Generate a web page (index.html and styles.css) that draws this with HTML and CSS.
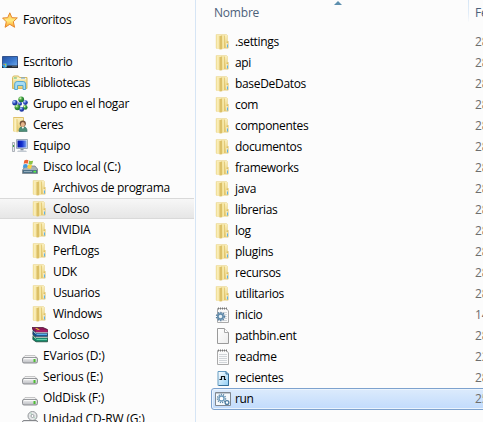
FILE: index.html
```html
<!DOCTYPE html>
<html lang="es">
<head>
<meta charset="utf-8">
<title>Coloso</title>
<link rel="stylesheet" href="styles.css">
</head>
<body>
<svg class="defs" width="0" height="0">
<defs>
<linearGradient id="gold" x2="1"><stop offset="0" stop-color="#eeda8c"/><stop offset=".5" stop-color="#fdf3c4"/><stop offset="1" stop-color="#e3c870"/></linearGradient>
<linearGradient id="goldv" x2="0" y2="1"><stop offset="0" stop-color="#fbf1c2"/><stop offset="1" stop-color="#e6ca6c"/></linearGradient>
<linearGradient id="star" x2="0" y2="1"><stop offset="0" stop-color="#ffc04a"/><stop offset=".55" stop-color="#ffec80"/><stop offset="1" stop-color="#ff9d24"/></linearGradient>
<linearGradient id="blue" x2="1" y2="1"><stop offset="0" stop-color="#234f9f"/><stop offset=".5" stop-color="#3977cd"/><stop offset="1" stop-color="#76b2ee"/></linearGradient>
<linearGradient id="screen" x2="1" y2="0"><stop offset="0" stop-color="#0714a8"/><stop offset=".5" stop-color="#1330cf"/><stop offset="1" stop-color="#7da4f1"/></linearGradient>
<linearGradient id="metal" x2="0" y2="1"><stop offset="0" stop-color="#f4f4f4"/><stop offset="1" stop-color="#b9bbc0"/></linearGradient>
<radialGradient id="ballb" cx=".35" cy=".3"><stop offset="0" stop-color="#d3e2ff"/><stop offset=".5" stop-color="#4a6ed6"/><stop offset="1" stop-color="#1c35a0"/></radialGradient>
<radialGradient id="ballg" cx=".35" cy=".3"><stop offset="0" stop-color="#e2f8cd"/><stop offset=".5" stop-color="#5bb54e"/><stop offset="1" stop-color="#247f36"/></radialGradient>
<linearGradient id="paper" x2="1" y2="1"><stop offset="0" stop-color="#fff"/><stop offset="1" stop-color="#ececec"/></linearGradient>
<linearGradient id="bpaper" x2="1" y2="1"><stop offset="0" stop-color="#fff"/><stop offset="1" stop-color="#8fcdf4"/></linearGradient>
</defs>
<symbol id="folder" viewBox="0 0 16 16">
<path d="M1.200.500h10.300l1 1v12.700H1.200z" fill="url(#goldv)" stroke="#ead592" stroke-width=".6"/>
<path d="M1 1 5 2v13.500L1 14z" fill="url(#gold)"/>
<path d="M5 2 7.300 1.300v14L5 15.600z" fill="#dcc067"/>
<path d="M7.300 1.300 9 1v13.300l-1.700.800z" fill="#f6e7a6"/>
<path d="M9 1.500h.8V14H9z" fill="#e0c46c"/>
<path d="M11.800 7.500 13.500 7v7.200h-1.700z" fill="#ddc064"/>
<path d="M11.500 9h1v4.500h-1z" fill="#fff"/><path d="M12 10.500h1v3h-1z" fill="#5db2e6"/>
</symbol>
<symbol id="fav" viewBox="0 0 16 16"><path d="M7.800.8 9.900 5.700l5.400.2-4 3.800 1.300 5.600-4.800-3-4.700 3 1.200-5.500L.6 6l5.100-.3z" fill="url(#star)" stroke="#e5882e" stroke-width="1"/></symbol>
<symbol id="desk" viewBox="0 0 16 16"><path d="M.5 2.500h15v11H.5z" fill="url(#blue)" stroke="#35558d"/><path d="M0 11.500h16V14H0z" fill="#252d38"/><path d="M10 12h5v1h-5z" fill="#555b60"/><circle cx="2.800" cy="11.500" r="2.400" fill="#2d9de4"/><path d="M1.500 11h1.200V9.800H1.500z" fill="#f06435"/><path d="M3 11h1.300V9.800H3z" fill="#a0d94b"/><path d="M3 11.400h1.300v1.200H3z" fill="#ffe350"/></symbol>
<symbol id="lib" viewBox="0 0 16 16"><path d="M.5 13.500v-11L1.500 1h5l1 1.500H15v11z" fill="url(#goldv)" stroke="#d8b95f"/><path d="M2 3.800h12" stroke="#fffbe0"/><path d="M1.800 3h3" stroke="#52b76b"/><path d="M9 3h4" stroke="#629fdf"/><path d="M2.700 14.500V9q0-2.500 2.500-2.500h6q2.400 0 2.400 2.500v5.500H11v-4H5.500v4z" fill="#a5dcf5" stroke="#4ca1cb" stroke-width=".9"/></symbol>
<symbol id="group" viewBox="0 0 16 16"><circle cx="9.200" cy="3.400" r="2.900" fill="url(#ballg)"/><circle cx="2.900" cy="6.800" r="2.700" fill="url(#ballb)"/><circle cx="13.400" cy="6.600" r="2.400" fill="url(#ballb)"/><circle cx="8" cy="7.700" r="2" fill="url(#ballb)"/><circle cx="5.500" cy="11.300" r="2.900" fill="url(#ballg)"/><circle cx="13.200" cy="11.400" r="2.400" fill="url(#ballg)"/><circle cx="9.700" cy="13.400" r="2.400" fill="url(#ballb)"/></symbol>
<symbol id="user" viewBox="0 0 16 16"><path d="M1.500.500h10v13.500h-10z" fill="url(#goldv)" stroke="#dfc06a"/><path d="M1.200 1 5.500 2.200v13.300l-4.300-1.500z" fill="url(#gold)"/><path d="M7 14.500q0-5 3.800-5 4.300 0 4.300 5z" fill="#4c8e79" stroke="#386e61" stroke-width=".6"/><circle cx="10.800" cy="6.500" r="3.100" fill="#76543b"/><ellipse cx="10.800" cy="7.600" rx="2" ry="2.500" fill="#e6b58d"/><path d="m9.700 10 1.200 2 1.200-2z" fill="#fff"/></symbol>
<symbol id="pc" viewBox="0 0 16 16"><path d="M.5 4.500h2v9h-2z" fill="#e8eaed" stroke="#9aa1aa" stroke-width=".8"/><path d="M1 7h1v2H1z" fill="#43a847"/><path d="M4.500 1.500h11v9h-11z" fill="#dce4ed" stroke="#9eabb9"/><path d="M5.500 2.500h9v7h-9z" fill="url(#screen)"/><path d="M8.500 11h3v1.500h-3z" fill="#8793a1"/><path d="M6 12.500h8l1 1.500H5z" fill="#c2c9d1"/></symbol>
<symbol id="cdisk" viewBox="0 0 16 16"><path d="m2 9 2-2h9l2.500 3v4.500H.5V11z" fill="#aab3b9" stroke="#747e86" stroke-width=".8"/><path d="M1 11h14v3H1z" fill="#4d7187"/><path d="M2 12.500h8" stroke="#92acbc"/><path d="M11.500 11.800h2.500v1.700h-2.500z" fill="#5af044"/><path d="M2.300 1.500Q4.500 0 6.500 1.200L5.700 4.800q-2-1-4 0z" fill="#ee6335"/><path d="M7.200 1.500q2 1 4 0l-1 3.700q-2 .900-3.800 0z" fill="#8bc246"/><path d="M1.500 5.400q2-.900 4 0l-.9 3.500q-1.800-.900-3.800 0z" fill="#419bdf"/><path d="M6.200 5.800q2 .900 3.900 0l-1 3.600q-2 .800-3.800-.3z" fill="#ffd23c"/></symbol>
<symbol id="rar" viewBox="0 0 16 16"><path d="M0 .5h11l4.500 2v2.500H4L1 3z" fill="#8d1557" stroke="#3c0c2b" stroke-width=".7"/><path d="M3 1h2l3 2H6z" fill="#e4c331"/><path d="M4 3h11.500v2.500H4z" fill="#a61c64"/><path d="M1 3.500 4 5.700h11.500v4H4L.8 7.500z" fill="#14508c" stroke="#172b42" stroke-width=".7"/><path d="M4.500 7.500H15" stroke="#5ab0ea" stroke-width="1.200"/><path d="M1 8.500 4 10.500h11.500v4.300H4L.8 12.500z" fill="#118465" stroke="#153c2d" stroke-width=".7"/><path d="M4.500 12.500H15" stroke="#68d0a8" stroke-width="1.200"/><path d="M4 5.800h11.500M4 10.300h11.500M1.500 4.500l2.500 2M1.500 9.500l2.500 2" stroke="#f4f4ec" stroke-width=".8"/></symbol>
<symbol id="drive" viewBox="0 0 16 16"><path d="M1 10 3 7.500h10l2 2.500z" fill="#f2f2f2" stroke="#b0b0b2" stroke-width=".7"/><rect x=".5" y="9.500" width="15" height="5.500" rx="1.500" fill="url(#metal)" stroke="#85878b" stroke-width=".9"/><path d="M2 10.400h11" stroke="#fff" stroke-width=".8"/><path d="M11.500 11h2v3h-2z" fill="#4dbe34"/></symbol>
<symbol id="cd" viewBox="0 0 16 16"><circle cx="10.500" cy="5" r="4.500" fill="#e5e7e8" stroke="#93979a"/><path d="m10.500 5-2-3.500M10.500 5l3 2.500" stroke="#a9d6bd"/><circle cx="10.500" cy="5" r="1.500" fill="#fff" stroke="#8b9095" stroke-width=".8"/><rect x=".5" y="9.500" width="15" height="5" rx="1.500" fill="url(#metal)" stroke="#85878b"/></symbol>
<symbol id="blank" viewBox="0 0 16 16"><path d="M2.500.500h7l4 4v11h-11z" fill="url(#paper)" stroke="#9a9a9a"/><path d="M9.500.500v4h4" fill="#fff" stroke="#a8a8a8"/></symbol>
<symbol id="note" viewBox="0 0 16 16"><path d="M2.500 1.500h9l2 2.500v11.500h-11z" fill="#fafafa" stroke="#aaa"/><path d="M3 1.500h9" stroke="#777" stroke-width="2" stroke-dasharray="1 1"/><path d="M4 5.500h8M4 7.500h8M4 9.500h8M4 11.500h8M4 13.500h8" stroke="#c6cbd0" stroke-width=".8"/></symbol>
<symbol id="ini" viewBox="0 0 16 16"><use href="#note"/><circle cx="5.500" cy="9.500" r="4" fill="none" stroke="#547d9f" stroke-width="1.500" stroke-dasharray="1.300 1.300"/><circle cx="5.500" cy="9.500" r="2.600" fill="#eaf3f8" stroke="#638dad" stroke-width="1.700"/></symbol>
<symbol id="reg" viewBox="0 0 16 16"><path d="M3 1.500h8l2.500 2.500v11.500H3z" fill="url(#bpaper)" stroke="#659cc2"/><path d="M11 1.500V4h2.500v11.500H4" fill="none" stroke="#356e98"/><path d="M4.500 9.500h2v-3h3v3H11" fill="none" stroke="#111" stroke-width="1.200"/></symbol>
<symbol id="bat" viewBox="0 0 16 16"><path d="M.5 1.500h15v13H.5z" fill="#f6f9fb" stroke="#7f8790"/><path d="M1 2.500h14" stroke="#bfc8d0"/><circle cx="6.500" cy="7.500" r="4" fill="none" stroke="#5e88a7" stroke-width="1.500" stroke-dasharray="1.200 1"/><circle cx="6.500" cy="7.500" r="2.500" fill="#fff" stroke="#6c9abb" stroke-width="1.300"/><circle cx="12" cy="11.500" r="1.900" fill="#fff" stroke="#4c7ca1" stroke-width="1.300"/></symbol>
</svg>
<div class="explorer">
<nav class="tree">
<div class="item"><svg><use href="#fav"/></svg><span>Favoritos</span></div>
<div class="item root"><svg><use href="#desk"/></svg><span>Escritorio</span></div>
<div class="item l1"><svg><use href="#lib"/></svg><span>Bibliotecas</span></div>
<div class="item l1"><svg><use href="#group"/></svg><span>Grupo en el hogar</span></div>
<div class="item l1"><svg><use href="#user"/></svg><span>Ceres</span></div>
<div class="item l1"><svg><use href="#pc"/></svg><span>Equipo</span></div>
<div class="item l2"><svg><use href="#cdisk"/></svg><span>Disco local (C:)</span></div>
<div class="item l3"><svg><use href="#folder"/></svg><span>Archivos de programa</span></div>
<div class="item l3 current"><svg><use href="#folder"/></svg><span>Coloso</span></div>
<div class="item l3"><svg><use href="#folder"/></svg><span>NVIDIA</span></div>
<div class="item l3"><svg><use href="#folder"/></svg><span>PerfLogs</span></div>
<div class="item l3"><svg><use href="#folder"/></svg><span>UDK</span></div>
<div class="item l3"><svg><use href="#folder"/></svg><span>Usuarios</span></div>
<div class="item l3"><svg><use href="#folder"/></svg><span>Windows</span></div>
<div class="item l3"><svg><use href="#rar"/></svg><span>Coloso</span></div>
<div class="item l2"><svg><use href="#drive"/></svg><span>EVarios (D:)</span></div>
<div class="item l2"><svg><use href="#drive"/></svg><span>Serious (E:)</span></div>
<div class="item l2"><svg><use href="#drive"/></svg><span>OldDisk (F:)</span></div>
<div class="item l2"><svg><use href="#cd"/></svg><span>Unidad CD-RW (G:)</span></div>
</nav>
<main class="files">
<header class="head"><span class="name">Nombre</span><svg class="sort" viewBox="0 0 8 4"><path d="M0 4 4 0l4 4z" fill="#5d8fae"/></svg><span class="date">Fe</span></header>
<div class="file"><svg><use href="#folder"/></svg><span class="name">.settings</span><span class="date">28</span></div>
<div class="file"><svg><use href="#folder"/></svg><span class="name">api</span><span class="date">28</span></div>
<div class="file"><svg><use href="#folder"/></svg><span class="name">baseDeDatos</span><span class="date">28</span></div>
<div class="file"><svg><use href="#folder"/></svg><span class="name">com</span><span class="date">28</span></div>
<div class="file"><svg><use href="#folder"/></svg><span class="name">componentes</span><span class="date">28</span></div>
<div class="file"><svg><use href="#folder"/></svg><span class="name">documentos</span><span class="date">28</span></div>
<div class="file"><svg><use href="#folder"/></svg><span class="name">frameworks</span><span class="date">28</span></div>
<div class="file"><svg><use href="#folder"/></svg><span class="name">java</span><span class="date">28</span></div>
<div class="file"><svg><use href="#folder"/></svg><span class="name">librerias</span><span class="date">28</span></div>
<div class="file"><svg><use href="#folder"/></svg><span class="name">log</span><span class="date">28</span></div>
<div class="file"><svg><use href="#folder"/></svg><span class="name">plugins</span><span class="date">28</span></div>
<div class="file"><svg><use href="#folder"/></svg><span class="name">recursos</span><span class="date">28</span></div>
<div class="file"><svg><use href="#folder"/></svg><span class="name">utilitarios</span><span class="date">28</span></div>
<div class="file"><svg><use href="#ini"/></svg><span class="name">inicio</span><span class="date">14</span></div>
<div class="file"><svg><use href="#blank"/></svg><span class="name">pathbin.ent</span><span class="date">28</span></div>
<div class="file"><svg><use href="#note"/></svg><span class="name">readme</span><span class="date">22</span></div>
<div class="file"><svg><use href="#reg"/></svg><span class="name">recientes</span><span class="date">28</span></div>
<div class="file selected"><svg><use href="#bat"/></svg><span class="name">run</span><span class="date">25</span></div>
</main>
</div>
</body>
</html>
```
FILE: styles.css
```css
* { box-sizing: border-box; }
body {
  margin: 0;
  overflow: hidden;
  background: #fcfcfc;
  font: 12px/20px "Open Sans", "Noto Sans", sans-serif;
  letter-spacing: -0.32px;
  color: #000;
}
.defs { display: block; }
.explorer { display: flex; width: 483px; height: 422px; overflow: hidden; }
.tree { width: 196px; flex: none; padding: 9px 1px 0 0; border-right: 1px solid #d6e5f5; }
.item {
  display: flex;
  align-items: center;
  gap: 5px;
  height: 21px;
  padding-left: 2px;
  white-space: nowrap;
}
.item svg, .file svg { width: 16px; height: 16px; flex: none; }
.root { margin-top: 21px; }
.l1 { padding-left: 12px; }
.l2 { padding-left: 22px; letter-spacing: -0.15px; }
.l3 { padding-left: 32px; }
.current {
  background: linear-gradient(#f8f8f8, #e5e5e5);
  box-shadow: inset 0 1px #d9d9d9, inset 0 -1px #d9d9d9;
}
.files { flex: none; width: 287px; }
.head { display: flex; height: 31px; color: #4c607a; letter-spacing: -0.2px; }
.head .name { width: 120px; flex: none; padding: 3px 0 0 18px; }
.sort { width: 8px; height: 4px; flex: none; margin: 1px 0 0 18px; }
.head .date {
  flex: none;
  margin-left: 126px;
  height: 22px;
  padding: 3px 0 0 6px;
  border-left: 1px solid;
  border-image: linear-gradient(#d5e5f5, #e2edf8 60%, #fcfcfc) 1;
}
.file {
  display: flex;
  align-items: center;
  height: 21px;
  padding-left: 19px;
  white-space: nowrap;
}
.file .name { width: 244px; flex: none; padding-left: 4px; }
.file .date { flex: none; color: #6d6d6d; letter-spacing: 0; }
.selected {
  height: 22px;
  margin-left: 15px;
  width: 290px;
  padding-left: 3px;
  border: 1px solid #7da2ce;
  border-radius: 3px;
  background: linear-gradient(#dcebfc, #c1dbfc);
  box-shadow: inset 0 0 0 1px #ebf4fd;
}
```
